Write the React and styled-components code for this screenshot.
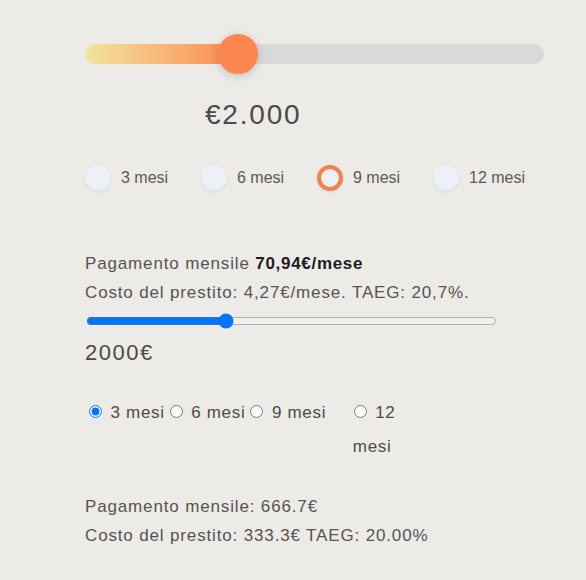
import { useState } from "react";
import styled, { createGlobalStyle } from "styled-components";

const GlobalStyle = createGlobalStyle`
  html, body {
    margin: 0;
    padding: 0;
    background: #ecebe7;
  }
  body {
    font-family: "Liberation Sans", Arial, sans-serif;
    color: #555452;
  }
`;

const Page = styled.div`
  width: 586px;
  height: 580px;
  box-sizing: border-box;
  padding: 44px 0 0 85px;
  display: flex;
  flex-direction: column;
`;

const Track = styled.div`
  position: relative;
  width: 459px;
  height: 20px;
  border-radius: 10px;
  background: #dad8d8;
`;

const Fill = styled.div`
  height: 100%;
  border-radius: 10px 0 0 10px;
  background: linear-gradient(90deg, #f3e59c 0%, #f8bb7c 45%, #fd8a50 100%);
`;

const Thumb = styled.div`
  position: absolute;
  top: -10px;
  width: 40px;
  height: 40px;
  margin-left: -20px;
  border-radius: 50%;
  background: #fe8650;
  box-shadow: 0 2px 8px rgba(0, 0, 0, 0.18);
`;

const Amount = styled.div`
  margin: 34px 0 0 120px;
  font-size: 28px;
  line-height: 34px;
  letter-spacing: 1.8px;
  color: #4b4a48;
`;

const Choices = styled.div`
  display: flex;
  margin-top: 33px;
`;

const Choice = styled.label`
  display: flex;
  align-items: center;
  gap: 10px;
  width: 116px;
  font-size: 16px;
  color: #5a5957;
`;

const Dot = styled.span`
  flex: none;
  width: 26px;
  height: 26px;
  box-sizing: border-box;
  border-radius: 50%;
  background: #eef0f7;
  box-shadow: 0 1px 3px rgba(0, 0, 0, 0.08), inset 0 -1px 2px rgba(0, 0, 0, 0.04);
  border: ${(p) => (p.$on ? "4px solid #f38150" : "none")};
`;

const Info = styled.div`
  margin-top: 58px;
  font-size: 17px;
  line-height: 29px;
  letter-spacing: 0.85px;
  color: #555452;
  & strong {
    color: #1d1d1d;
    letter-spacing: 0.7px;
  }
`;

const Range = styled.input`
  display: block;
  width: 411px;
  height: 16px;
  margin: 6px 0 0 1px;
`;

const Total = styled.div`
  margin-top: 10px;
  font-size: 22px;
  line-height: 28px;
  letter-spacing: 1.5px;
  color: #4b4a48;
`;

const NativeGroup = styled.div`
  display: flex;
  align-items: flex-start;
  margin: 29px 0 0 -1px;
  font-size: 17px;
  line-height: 34px;
  letter-spacing: 0.7px;
  color: #4d4c4a;
`;

const NativeLabel = styled.label`
  flex: none;
  width: ${(p) => (p.$narrow ? "50px" : "auto")};
  margin-left: ${(p) => (p.$narrow ? "21px" : "0")};
  text-align: ${(p) => (p.$narrow ? "center" : "left")};
`;

const Summary = styled.div`
  margin-top: 28px;
  font-size: 17px;
  line-height: 29px;
  letter-spacing: 0.85px;
  color: #555452;
`;

const terms = [3, 6, 9, 12];

export default function App() {
  const [term, setTerm] = useState(9);
  const [amount, setAmount] = useState(2000);
  const [plain, setPlain] = useState(3);
  const pct = 33.3;

  return (
    <Page>
      <GlobalStyle />
      <Track>
        <Fill style={{ width: `${pct}%` }} />
        <Thumb style={{ left: `${pct}%` }} />
      </Track>
      <Amount>€2.000</Amount>

      <Choices>
        {terms.map((t) => (
          <Choice key={t} onClick={() => setTerm(t)}>
            <Dot $on={term === t} />
            {t} mesi
          </Choice>
        ))}
      </Choices>

      <Info>
        Pagamento mensile <strong>70,94€/mese</strong>
        <br />
        Costo del prestito: 4,27€/mese. TAEG: 20,7%.
      </Info>
      <Range
        type="range"
        min="500"
        max="5000"
        step="100"
        value={amount}
        onChange={(e) => setAmount(Number(e.target.value))}
      />
      <Total>{amount}€</Total>

      <NativeGroup>
        {terms.map((t) => (
          <NativeLabel key={t} $narrow={t === 12}>
            <input
              type="radio"
              name="plain"
              checked={plain === t}
              onChange={() => setPlain(t)}
            />{" "}
            {t} mesi
          </NativeLabel>
        ))}
      </NativeGroup>

      <Summary>
        Pagamento mensile: 666.7€
        <br />
        Costo del prestito: 333.3€ TAEG: 20.00%
      </Summary>
    </Page>
  );
}
